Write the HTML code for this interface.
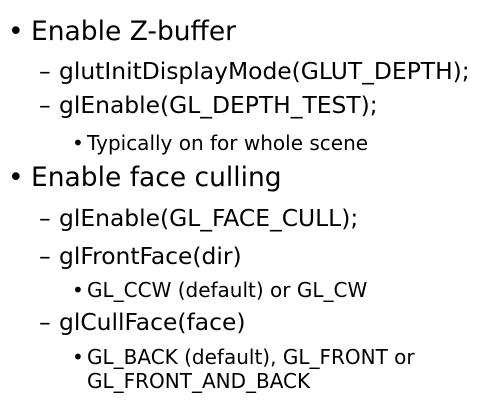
<!DOCTYPE html>
<html><head><meta charset="utf-8"><style>
html,body{margin:0;padding:0;background:#fff;width:480px;height:404px;overflow:hidden}
body{position:relative;font-family:"DejaVu Sans","Liberation Sans",sans-serif;color:#000}
div{position:absolute;line-height:1;white-space:nowrap}
.l1{font-size:26.5px}
.l2{font-size:23.4px}
.l3{font-size:20px}
</style></head><body>
<div class="l1" style="left:8px;top:18.6px">•</div>
<div class="l1" style="left:31px;top:18.6px">Enable Z-buffer</div>
<div class="l2" style="left:39px;top:60px">–</div>
<div class="l2" style="left:59px;top:60px">glutInitDisplayMode(GLUT_DEPTH);</div>
<div class="l2" style="left:39px;top:94px">–</div>
<div class="l2" style="left:59px;top:94px">glEnable(GL_DEPTH_TEST);</div>
<div class="l3" style="left:72px;top:133px">•</div>
<div class="l3" style="left:87px;top:133px">Typically on for whole scene</div>
<div class="l1" style="left:8px;top:164.6px">•</div>
<div class="l1" style="left:31px;top:164.6px">Enable face culling</div>
<div class="l2" style="left:39px;top:207px">–</div>
<div class="l2" style="left:59px;top:207px">glEnable(GL_FACE_CULL);</div>
<div class="l2" style="left:39px;top:245px">–</div>
<div class="l2" style="left:59px;top:245px">glFrontFace(dir)</div>
<div class="l3" style="left:72px;top:280px">•</div>
<div class="l3" style="left:87px;top:280px">GL_CCW (default) or GL_CW</div>
<div class="l2" style="left:39px;top:311px">–</div>
<div class="l2" style="left:59px;top:311px">glCullFace(face)</div>
<div class="l3" style="left:72px;top:347px">•</div>
<div class="l3" style="left:87px;top:347px">GL_BACK (default), GL_FRONT or</div>
<div class="l3" style="left:87px;top:371px">GL_FRONT_AND_BACK</div>
</body></html>
